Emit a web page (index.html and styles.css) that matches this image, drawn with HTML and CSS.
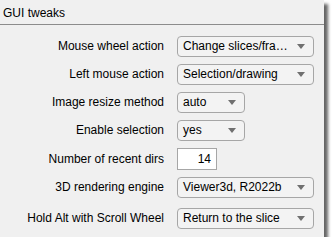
FILE: index.html
```html
<!DOCTYPE html>
<html>
<head>
<meta charset="utf-8">
<link rel="stylesheet" href="styles.css">
</head>
<body>
<div class="panel">
  <div class="title">GUI tweaks</div>
  <div class="form">
    <div class="label">Mouse wheel action</div>
    <div class="dd wide"><span class="val">Change slices/fra…</span><span class="arrow"></span></div>
    <div class="label">Left mouse action</div>
    <div class="dd wide"><span class="val">Selection/drawing</span><span class="arrow"></span></div>
    <div class="label">Image resize method</div>
    <div class="dd narrow"><span class="val">auto</span><span class="arrow"></span></div>
    <div class="label">Enable selection</div>
    <div class="dd narrow"><span class="val">yes</span><span class="arrow"></span></div>
    <div class="label">Number of recent dirs</div>
    <div class="edit">14</div>
    <div class="label">3D rendering engine</div>
    <div class="dd wide"><span class="val">Viewer3d, R2022b</span><span class="arrow"></span></div>
    <div class="label last">Hold Alt with Scroll Wheel</div>
    <div class="dd wide last"><span class="val">Return to the slice</span><span class="arrow"></span></div>
  </div>
</div>
</body>
</html>
```
FILE: styles.css
```css
html, body {
  margin: 0;
  padding: 0;
  background: #ffffff;
}
body {
  font-family: "Liberation Sans", Arial, sans-serif;
  font-size: 12px;
  color: #000;
}
.panel {
  width: 324px;
  height: 237px;
  background: #f0f0f0;
  box-shadow: 4px 4px 3px rgba(0, 0, 0, 0.6);
  box-sizing: border-box;
}
.title {
  height: 24px;
  line-height: 26px;
  padding-left: 3px;
  border-bottom: 1px solid #8c8c8c;
  box-sizing: content-box;
}
.form {
  display: grid;
  grid-template-columns: 164px auto;
  column-gap: 13px;
  row-gap: 7px;
  padding-top: 11px;
  justify-items: start;
  align-items: center;
}
.label {
  justify-self: end;
  white-space: nowrap;
  line-height: 21px;
}
.last {
  margin-top: 3px;
}
.dd {
  display: flex;
  align-items: center;
  justify-content: space-between;
  height: 21px;
  box-sizing: border-box;
  border: 1px solid #a6a6a6;
  border-radius: 4px;
  background: #f3f3f3;
  padding: 0 8px 0 5px;
  white-space: nowrap;
}
.dd.wide { width: 137px; }
.dd.narrow { width: 68px; }
.val {
  line-height: 19px;
}
.arrow {
  width: 0;
  height: 0;
  border-left: 4px solid transparent;
  border-right: 4px solid transparent;
  border-top: 5px solid #707070;
}
.edit {
  width: 40px;
  height: 22px;
  box-sizing: border-box;
  border: 1px solid #a6a6a6;
  background: #ffffff;
  text-align: right;
  padding-right: 5px;
  line-height: 20px;
}
```
